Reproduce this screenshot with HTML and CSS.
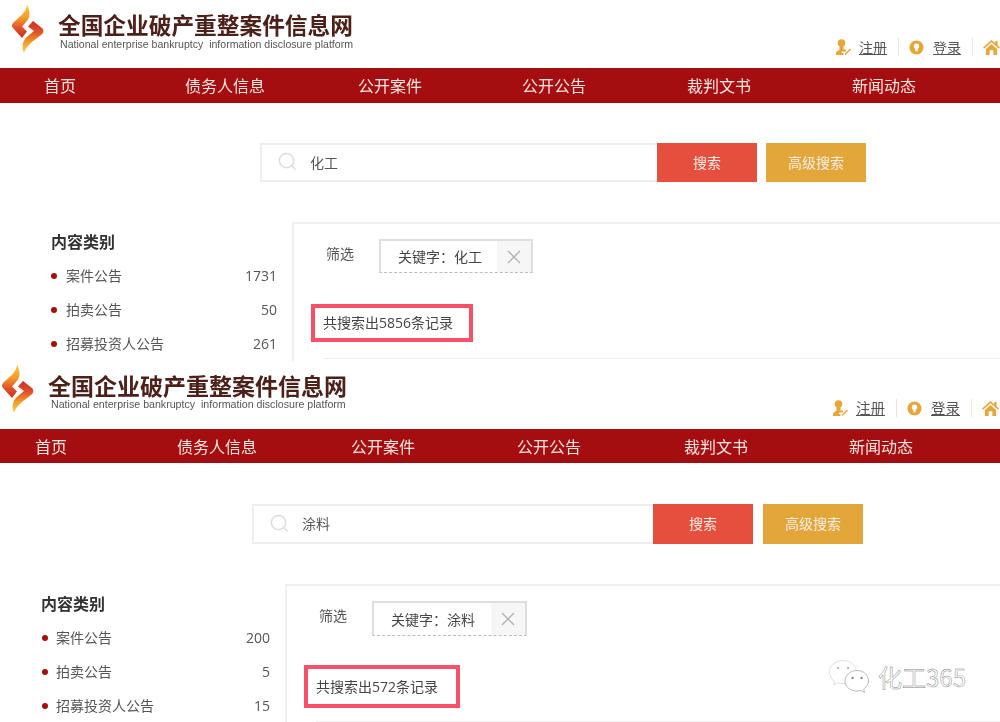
FILE: index.html
```html
<!DOCTYPE html>
<html lang="zh-CN">
<head>
<meta charset="utf-8">
<title>全国企业破产重整案件信息网</title>
<link rel="stylesheet" href="styles.css">
</head>
<body>
<svg class="defs" width="0" height="0" aria-hidden="true">
  <defs>
    <linearGradient id="flameA" x1="0.5" y1="0" x2="0.5" y2="1">
      <stop offset="0" stop-color="#fbc93c"/><stop offset="0.4" stop-color="#f39a28"/><stop offset="0.7" stop-color="#e2512a"/><stop offset="1" stop-color="#c9302a"/>
    </linearGradient>
    <linearGradient id="flameB" x1="0.5" y1="0" x2="0.5" y2="1">
      <stop offset="0" stop-color="#c9302a"/><stop offset="0.35" stop-color="#e2512a"/><stop offset="0.65" stop-color="#f39a28"/><stop offset="1" stop-color="#fbd35a"/>
    </linearGradient>
    <symbol id="logo" viewBox="0 0 36 50">
      <path fill="url(#flameA)" d="M18 1C22 8 21 14 17 18L13 22.500 18 27.500 13 34 4 24C2 22 3 20 5 18 10 13 17 9 18 1Z"/>
      <path fill="url(#flameB)" d="M15 49C12 42 14 36 19 32L25 27 19 22.500 24 17 33 24C35 26 35 29 32 31 26 36 18 40 15 49Z"/>
    </symbol>
    <symbol id="user" viewBox="0 0 16 17">
      <circle cx="6.500" cy="4" r="3.800" fill="#e5a63a"/>
      <path fill="#e5a63a" d="M4.500 7h4v3.500h2.500v2H7.500l-1 1.500h2v2H1C0.500 13 2.500 11.500 4.500 11z"/>
      <path stroke="#e5a63a" stroke-width="1.500" fill="none" d="M10 15.500l5.500-5.500"/>
    </symbol>
    <symbol id="lock" viewBox="0 0 16 16">
      <circle cx="8" cy="8" r="7.500" fill="#e5a63a"/>
      <circle cx="8" cy="6.600" r="2.800" fill="#fff"/>
      <rect x="6.700" y="7" width="2.600" height="5" fill="#fff"/>
    </symbol>
    <symbol id="home" viewBox="0 0 18 16">
      <path fill="#e5a63a" d="M9 0l4 3.500V1h2.500v4.700L18 8l-1 1.300-8-7-8 7L0 8z"/>
      <path fill="#e5a63a" d="M3 9.500L9 4.300l6 5.200V16h-4v-5H7v5H3z"/>
    </symbol>
    <symbol id="glass" viewBox="0 0 20 20">
      <circle cx="9" cy="9" r="7.500" fill="none" stroke="#dcdcdc" stroke-width="1.500"/>
      <path d="M14.500 14.500l4 4" stroke="#dcdcdc" stroke-width="1.500"/>
    </symbol>
    <symbol id="cross" viewBox="0 0 14 14">
      <path d="M1 1l12 12M13 1L1 13" stroke="#b0b0b0" stroke-width="1.300" fill="none"/>
    </symbol>
  </defs>
</svg>

<section class="panel panel-a">
  <header class="top">
    <svg class="logo"><use href="#logo"/></svg>
    <div class="brand">
      <div class="brand-cn">全国企业破产重整案件信息网</div>
      <div class="brand-en">National enterprise bankruptcy&nbsp; information disclosure platform</div>
    </div>
    <div class="links">
      <svg class="ic-user"><use href="#user"/></svg><a class="link">注册</a><i class="sep"></i>
      <svg class="ic-lock"><use href="#lock"/></svg><a class="link">登录</a><i class="sep"></i>
      <svg class="ic-home"><use href="#home"/></svg>
    </div>
  </header>
  <nav class="nav">
    <span class="nav-1">首页</span><span class="nav-2">债务人信息</span><span class="nav-3">公开案件</span><span class="nav-4">公开公告</span><span class="nav-5">裁判文书</span><span class="nav-6">新闻动态</span>
  </nav>
  <div class="search">
    <div class="field"><svg class="glass"><use href="#glass"/></svg><span>化工</span></div>
    <div class="btn btn-red">搜索</div>
    <div class="btn btn-gold">高级搜索</div>
  </div>
  <div class="content">
    <aside class="side">
      <h3 class="side-title">内容类别</h3>
      <div class="row"><i class="dot"></i><span class="row-label">案件公告</span><span class="row-num">1731</span></div>
      <div class="row"><i class="dot"></i><span class="row-label">拍卖公告</span><span class="row-num">50</span></div>
      <div class="row"><i class="dot"></i><span class="row-label">招募投资人公告</span><span class="row-num">261</span></div>
    </aside>
    <main class="main">
      <div class="filter">
        <span class="filter-label">筛选</span>
        <div class="tag"><span class="tag-text">关键字：化工</span><span class="tag-x"><svg class="cross"><use href="#cross"/></svg></span></div>
      </div>
      <div class="total">共搜索出5856条记录</div>
      <div class="rule"></div>
    </main>
  </div>
</section>

<section class="panel panel-b">
  <header class="top">
    <svg class="logo"><use href="#logo"/></svg>
    <div class="brand">
      <div class="brand-cn">全国企业破产重整案件信息网</div>
      <div class="brand-en">National enterprise bankruptcy&nbsp; information disclosure platform</div>
    </div>
    <div class="links">
      <svg class="ic-user"><use href="#user"/></svg><a class="link">注册</a><i class="sep"></i>
      <svg class="ic-lock"><use href="#lock"/></svg><a class="link">登录</a><i class="sep"></i>
      <svg class="ic-home"><use href="#home"/></svg>
    </div>
  </header>
  <nav class="nav">
    <span class="nav-1">首页</span><span class="nav-2">债务人信息</span><span class="nav-3">公开案件</span><span class="nav-4">公开公告</span><span class="nav-5">裁判文书</span><span class="nav-6">新闻动态</span>
  </nav>
  <div class="search">
    <div class="field"><svg class="glass"><use href="#glass"/></svg><span>涂料</span></div>
    <div class="btn btn-red">搜索</div>
    <div class="btn btn-gold">高级搜索</div>
  </div>
  <div class="content">
    <aside class="side">
      <h3 class="side-title">内容类别</h3>
      <div class="row"><i class="dot"></i><span class="row-label">案件公告</span><span class="row-num">200</span></div>
      <div class="row"><i class="dot"></i><span class="row-label">拍卖公告</span><span class="row-num">5</span></div>
      <div class="row"><i class="dot"></i><span class="row-label">招募投资人公告</span><span class="row-num">15</span></div>
    </aside>
    <main class="main">
      <div class="filter">
        <span class="filter-label">筛选</span>
        <div class="tag"><span class="tag-text">关键字：涂料</span><span class="tag-x"><svg class="cross"><use href="#cross"/></svg></span></div>
      </div>
      <div class="total">共搜索出572条记录</div>
      <div class="rule"></div>
    </main>
  </div>
</section>

<div class="watermark">
  <svg class="wechat" viewBox="0 0 40 33">
    <path d="M14 .5C6.500 .5 .5 5.500 .5 12c0 4 2 7 5 9.500L5 25l4-2.200c1.500 .5 3 .7 5 .7 7.500 0 13.500-5 13.500-11.500S21.500 .5 14 .5z" fill="#fff" stroke="#d0d0d0" stroke-width=".7"/>
    <path d="M28 10.500c-6.500 0-12 4.500-12 10.500s5.500 10 12 10c1.500 0 2.500-.2 4-.6l3.500 2.300-.8-3.700c3-2 4.800-4.800 4.800-8 0-6-5-10.500-11.500-10.500z" fill="#fff" stroke="#a8a8a8" stroke-width=".8"/>
    <circle cx="9" cy="8" r="1.100" fill="#aaa"/><circle cx="19" cy="8" r="1.100" fill="#aaa"/>
    <circle cx="23.500" cy="18" r="1.200" fill="#888"/><circle cx="32.500" cy="18" r="1.200" fill="#888"/>
  </svg>
  <span class="wm-text">化工365</span>
</div>
</body>
</html>
```
FILE: styles.css
```css
* { box-sizing: border-box; }
html, body { margin: 0; padding: 0; }
body {
  width: 1000px;
  height: 722px;
  overflow: hidden;
  position: relative;
  background: #fff;
  font-family: "Noto Sans CJK SC", "Liberation Sans", sans-serif;
  color: #444;
}
.defs { display: block; height: 0; }
.panel { height: 361px; overflow: hidden; background: #fff; filter: blur(0.35px); }

/* header */
.top { display: flex; align-items: flex-start; height: 68px; }
.logo { width: 36px; height: 50px; flex: none; }
.brand { flex: none; margin-left: 13px; }
.brand-cn { font-size: 22.700px; line-height: 22px; margin-bottom: 2px; font-weight: 700; color: #4b2119; white-space: nowrap; }
.brand-en { font-family: "Liberation Sans", sans-serif; line-height: 12px; color: #555; white-space: nowrap; }
.links { margin-left: auto; display: flex; align-items: center; }
.link { font-size: 14px; line-height: 18px; color: #555; text-decoration: underline; margin-right: 11px; }
.sep { width: 1px; height: 18px; background: #ece6da; margin-right: 10px; }
.ic-user { width: 16px; height: 17px; margin-right: 8px; }
.ic-lock { width: 15px; height: 15px; margin-right: 9px; }
.ic-home { width: 17px; height: 15px; }

/* nav */
.nav { background: #a50e10; color: #f7e6e0; font-size: 16px; display: flex; align-items: center; white-space: nowrap; }
.nav span { flex: none; }

/* search */
.search { display: flex; }
.field { display: flex; align-items: center; border: 2px solid #ededed; border-right: 0; font-size: 14px; color: #555; padding-bottom: 2px; }
.glass { width: 19px; height: 19px; }
.btn { color: #fbeee6; font-size: 14px; display: flex; align-items: center; justify-content: center; width: 100px; padding-bottom: 2px; }
.btn-red { background: #e54f3d; }
.btn-gold { background: #e3a63a; }

/* content */
.content { display: flex; }
.side { flex: none; }
.side-title { margin: 0; font-size: 16px; line-height: 22px; font-weight: 700; color: #333; }
.row { display: flex; align-items: center; font-size: 14px; line-height: 20px; height: 34px; }
.dot { width: 6px; height: 6px; border-radius: 50%; background: #a50e10; margin-right: 9px; flex: none; }
.row-label { color: #555; flex: 1; margin-top: -2px; }
.row-num { font-family: "Open Sans", sans-serif; font-size: 14px; color: #555; }
.main { flex: 1; border-top: 2px solid #f0f0f0; border-left: 2px solid #f0f0f0; min-height: 300px; }
.filter { display: flex; align-items: flex-start; }
.filter-label { font-size: 14px; line-height: 20px; color: #555; margin-top: 4px; }
.tag { display: flex; border: 2px solid #dedede; border-bottom: 1px dashed #bbb; font-size: 14px; color: #444; }
.tag-text { flex: 1; display: flex; align-items: center; padding-bottom: 1px; white-space: nowrap; }
.tag-x { width: 34px; background: #f6f6f6; display: flex; align-items: center; justify-content: center; }
.cross { width: 14px; height: 14px; }
.total { border: 4px solid #f9506a; font-family: "Open Sans", "Noto Sans CJK SC", sans-serif; font-size: 14px; color: #444; display: flex; align-items: center; padding-bottom: 2px; white-space: nowrap; }
.rule { height: 1px; background: #eee; }

/* panel A offsets */
.panel-a .logo { margin: 4px 0 0 9px; }
.panel-a .brand { margin-top: 14px; }
.panel-a .brand-en { margin-left: 2px; font-size: 10.570px; }
.panel-a .links { margin-top: 38px; }
.panel-a .nav { height: 35px; padding-bottom: 2px; }
.panel-a .nav-1 { margin-left: 44px; width: 141px; }
.panel-a .nav-2 { width: 173px; }
.panel-a .nav-3 { width: 164px; }
.panel-a .nav-4 { width: 165px; }
.panel-a .nav-5 { width: 165px; }
.panel-a .search { margin: 40px 0 0 260px; height: 39px; }
.panel-a .field { width: 397px; padding-left: 16px; }
.panel-a .field span { margin-left: 13px; }
.panel-a .btn-gold { margin-left: 9px; }
.panel-a .content { margin-top: 40px; }
.panel-a .side { width: 292px; padding: 8px 15px 0 51px; }
.panel-a .row:first-of-type { margin-top: 7px; }
.panel-a .filter { padding: 15px 0 0 32px; }
.panel-a .filter-label { width: 53px; }
.panel-a .tag { width: 154px; height: 34px; }
.panel-a .tag-text { padding-left: 17px; }
.panel-a .total { margin: 31px 0 0 17px; width: 162px; height: 38px; padding-left: 8px; }
.panel-a .rule { margin: 16px 0 0 29px; }

/* panel B offsets */
.panel-b .logo { margin: 3px 0 0 -1px; }
.panel-b .brand { margin-top: 13px; }
.panel-b .brand-cn { font-size: 23px; }
.panel-b .brand-en { margin-left: 3px; font-size: 10.640px; }
.panel-b .links { margin-top: 38px; margin-right: 1px; }
.panel-b .link { font-size: 14.500px; }
.panel-b .nav { height: 34px; }
.panel-b .nav-1 { margin-left: 35px; width: 142px; }
.panel-b .nav-2 { width: 174px; }
.panel-b .nav-3 { width: 166px; }
.panel-b .nav-4 { width: 167px; }
.panel-b .nav-5 { width: 165px; }
.panel-b .search { margin: 41px 0 0 252px; height: 40px; }
.panel-b .field { width: 401px; padding-left: 16px; }
.panel-b .field span { margin-left: 13px; }
.panel-b .btn-gold { margin-left: 10px; }
.panel-b .content { margin-top: 40px; }
.panel-b .side { width: 285px; padding: 8px 15px 0 41px; }
.panel-b .dot { margin-left: 1px; margin-right: 8px; }
.panel-b .row:first-of-type { margin-top: 7px; }
.panel-b .filter { padding: 15px 0 0 32px; }
.panel-b .filter-label { width: 53px; }
.panel-b .tag { width: 155px; height: 35px; }
.panel-b .tag-text { padding-left: 17px; }
.panel-b .total { margin: 29px 0 0 17px; width: 156px; height: 43px; padding-left: 8px; }
.panel-b .rule { margin: 13px 0 0 29px; }

/* WeChat article watermark lying over the picture */
.watermark { position: absolute; left: 829px; top: 660px; display: flex; align-items: center; gap: 9px; }
.wechat { width: 40px; height: 33px; flex: none; }
.wm-text { font-size: 24px; line-height: 33px; color: #fff; -webkit-text-stroke: 0.45px #808080; white-space: nowrap; }
```
